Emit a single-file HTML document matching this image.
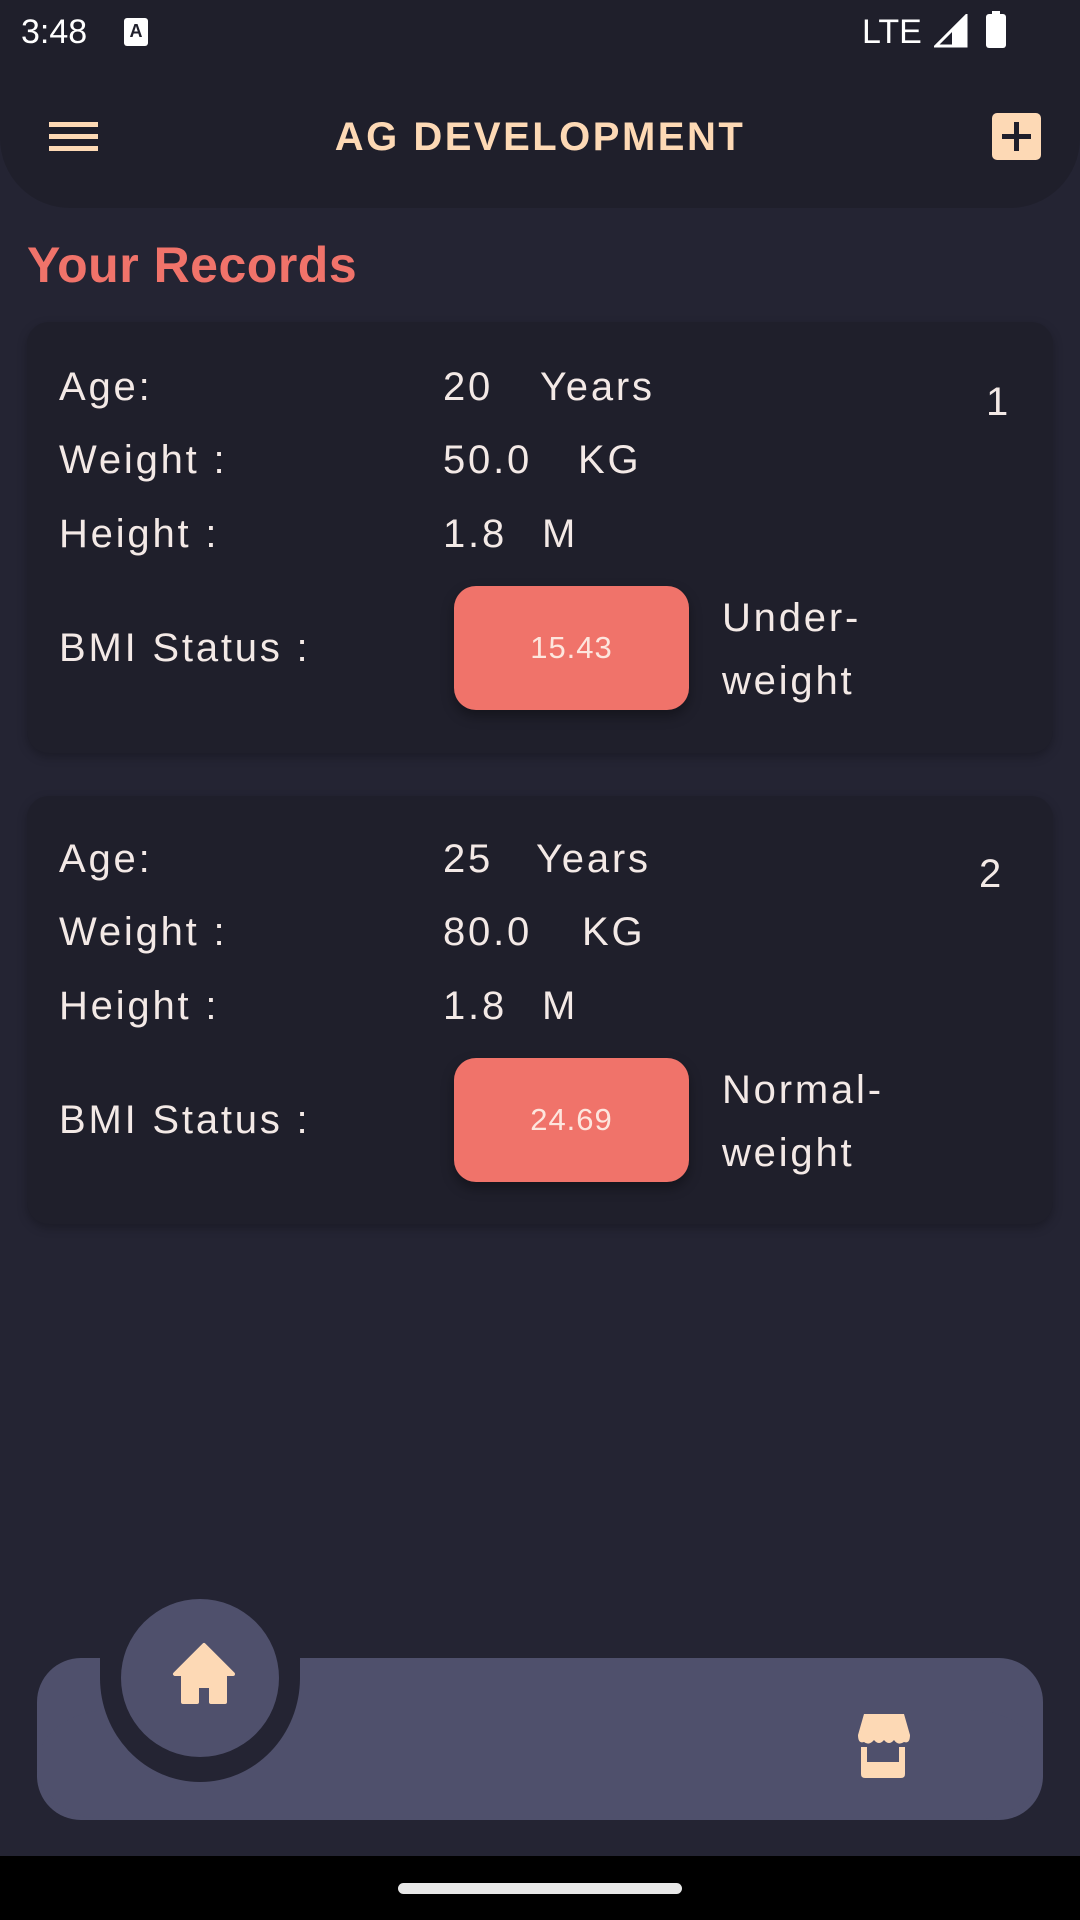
<!DOCTYPE html>
<html><head><meta charset="utf-8"><style>
*{margin:0;padding:0;box-sizing:border-box}
body{width:1080px;height:1920px;background:#242433;position:relative;overflow:hidden;font-family:"Liberation Sans",sans-serif;color:#f3e9e6}
.a{position:absolute;white-space:nowrap}
.t{font-size:40px;letter-spacing:2.8px;line-height:50px}
.card{position:absolute;left:27px;width:1026px;background:#1f1f2b;border-radius:22px;box-shadow:0 4px 10px rgba(0,0,0,.25)}
.btn{position:absolute;left:454px;width:235px;height:124px;background:#f0736a;border-radius:22px;color:#fde6de;font-size:31px;letter-spacing:1px;text-align:center;line-height:124px;box-shadow:0 6px 12px rgba(0,0,0,.35)}
</style></head><body>
<div class="a" style="left:0;top:0;width:1080px;height:208px;background:#1f1f2b;border-radius:0 0 70px 70px"></div>
<div class="a" style="left:21px;top:12px;font-size:34px;color:#fff;line-height:40px">3:48</div>
<div class="a" style="left:124px;top:18px;width:24px;height:28px;background:#fff;border-radius:3px;color:#1f1f2b;font-size:18px;font-weight:bold;text-align:center;line-height:26px">A</div>
<div class="a" style="left:862px;top:12px;font-size:34px;color:#fff;line-height:40px">LTE</div>
<svg class="a" style="left:934px;top:14px" width="34" height="34"><polygon points="32,2 32,32 2,32" fill="none" stroke="#fff" stroke-width="3"/><polygon points="32,2 32,32 18,32 18,16" fill="#fff"/></svg>
<div class="a" style="left:986px;top:14px;width:20px;height:34px;background:#fff;border-radius:3px"></div>
<div class="a" style="left:992px;top:11px;width:8px;height:5px;background:#fff"></div>
<div class="a" style="left:49px;top:122px;width:49px;height:5px;background:#fdd9b5"></div>
<div class="a" style="left:49px;top:134px;width:49px;height:5px;background:#fdd9b5"></div>
<div class="a" style="left:49px;top:146px;width:49px;height:5px;background:#fdd9b5"></div>
<div class="a" style="left:0;width:1080px;top:113px;text-align:center;font-size:40px;font-weight:bold;color:#fdd9b5;letter-spacing:2.5px;line-height:48px">AG DEVELOPMENT</div>
<div class="a" style="left:992px;top:113px;width:49px;height:47px;background:#fdd9b5;border-radius:5px"></div>
<div class="a" style="left:1002px;top:134px;width:29px;height:5px;background:#1f1f2b"></div>
<div class="a" style="left:1014px;top:122px;width:5px;height:29px;background:#1f1f2b"></div>
<div class="a" style="left:27px;top:236px;font-size:50px;font-weight:bold;color:#f0736a;line-height:58px;letter-spacing:0.5px">Your Records</div>

<div class="card" style="top:322px;height:431px"></div>
<div class="a t" style="left:59px;top:362px">Age:</div>
<div class="a t" style="left:443px;top:362px">20</div>
<div class="a t" style="left:540px;top:362px">Years</div>
<div class="a t" style="left:986px;top:377px">1</div>
<div class="a t" style="left:59px;top:435px">Weight :</div>
<div class="a t" style="left:443px;top:435px">50.0</div>
<div class="a t" style="left:578px;top:435px">KG</div>
<div class="a t" style="left:59px;top:509px">Height :</div>
<div class="a t" style="left:443px;top:509px">1.8</div>
<div class="a t" style="left:542px;top:509px">M</div>
<div class="a t" style="left:59px;top:623px">BMI Status :</div>
<div class="btn" style="top:586px">15.43</div>
<div class="a t" style="left:722px;top:593px">Under-</div>
<div class="a t" style="left:722px;top:656px">weight</div>

<div class="card" style="top:796px;height:428px"></div>
<div class="a t" style="left:59px;top:834px">Age:</div>
<div class="a t" style="left:443px;top:834px">25</div>
<div class="a t" style="left:536px;top:834px">Years</div>
<div class="a t" style="left:979px;top:849px">2</div>
<div class="a t" style="left:59px;top:907px">Weight :</div>
<div class="a t" style="left:443px;top:907px">80.0</div>
<div class="a t" style="left:582px;top:907px">KG</div>
<div class="a t" style="left:59px;top:981px">Height :</div>
<div class="a t" style="left:443px;top:981px">1.8</div>
<div class="a t" style="left:542px;top:981px">M</div>
<div class="a t" style="left:59px;top:1095px">BMI Status :</div>
<div class="btn" style="top:1058px">24.69</div>
<div class="a t" style="left:722px;top:1065px">Normal-</div>
<div class="a t" style="left:722px;top:1128px">weight</div>

<svg class="a" style="left:0;top:1590px" width="1080" height="266">
<rect x="37" y="68" width="1006" height="162" rx="44" fill="#4f506c"/>
<rect x="37" y="120" width="1006" height="110" rx="73" fill="#4f506c"/>
<ellipse cx="200" cy="88" rx="100" ry="104" fill="#242433"/>
<rect x="100" y="0" width="200" height="88" fill="#242433"/>
<circle cx="200" cy="88" r="79" fill="#4f506c"/>
<path d="M204 55 L175 84 H183 V112 H197 V96 H211 V112 H225 V84 H233 Z" fill="#fdd9b5" stroke="#fdd9b5" stroke-width="4" stroke-linejoin="round"/>
<path d="M864 124 H904 L910 145 Q910 154 904 152 Q898 156 894 150 Q889 156 884 150 Q879 156 874 150 Q869 156 864 152 Q858 154 858 145 Z" fill="#fdd9b5"/>
<path d="M861 157 H867 V172 H899 V157 H905 V184 Q905 188 901 188 H865 Q861 188 861 184 Z" fill="#fdd9b5"/>
</svg>
<div class="a" style="left:0;top:1856px;width:1080px;height:64px;background:#000"></div>
<div class="a" style="left:398px;top:1883px;width:284px;height:11px;background:#e8e8e8;border-radius:6px"></div>
</body></html>
